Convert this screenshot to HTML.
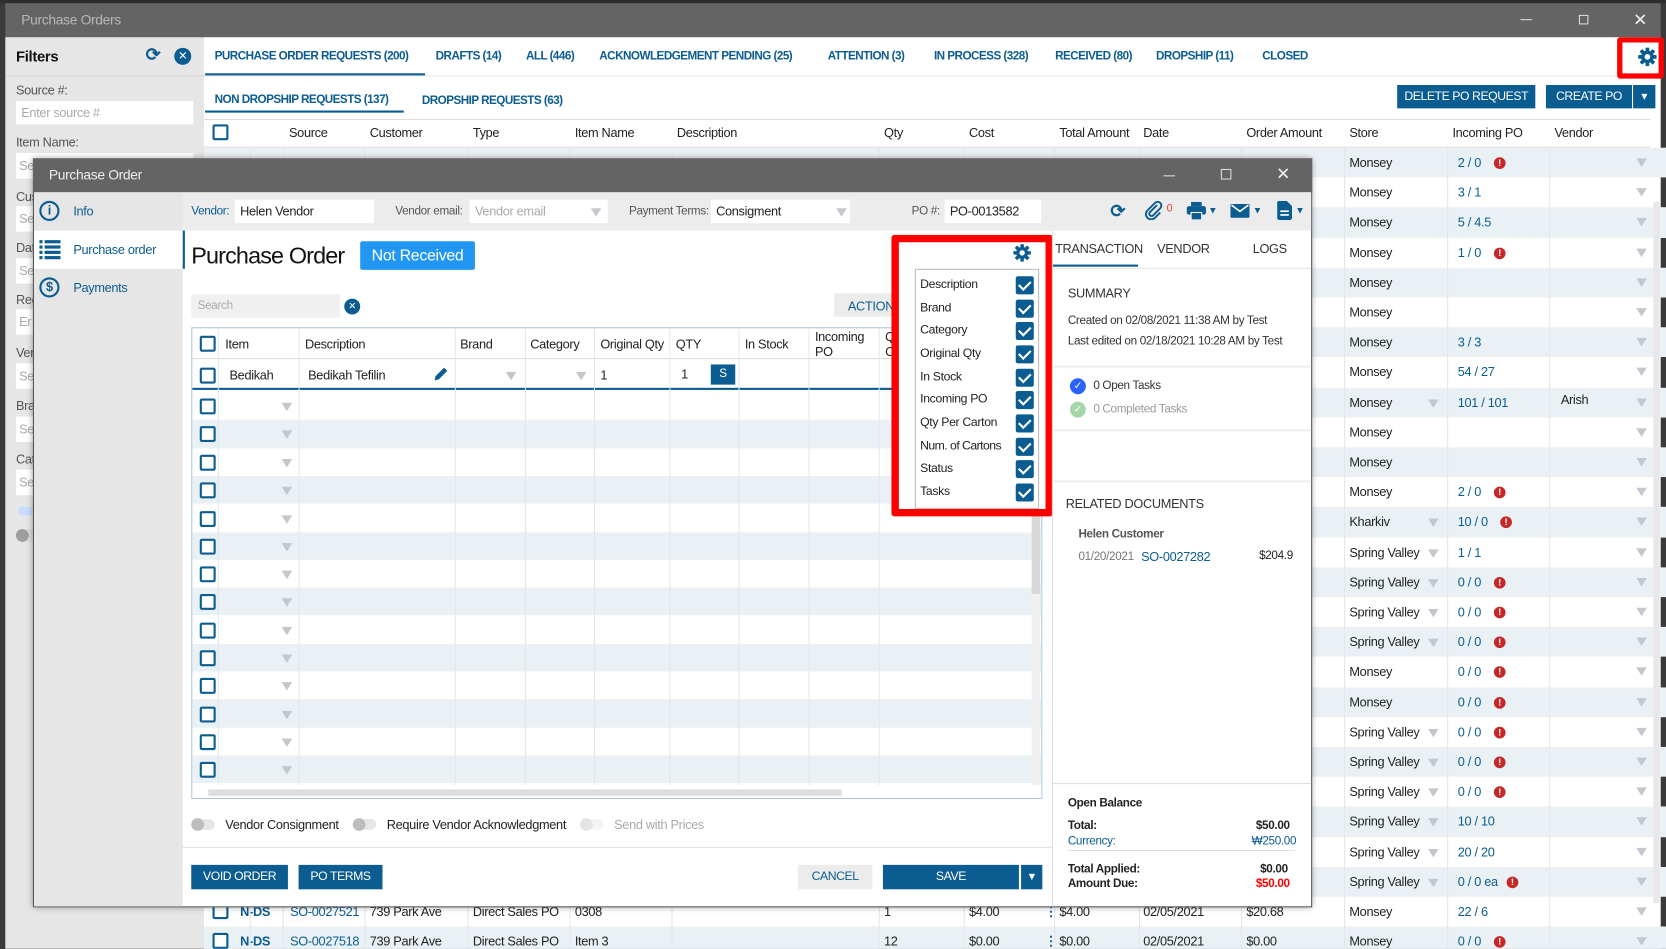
<!DOCTYPE html>
<html><head><meta charset="utf-8"><style>
*{box-sizing:border-box;margin:0;padding:0}
html,body{width:1666px;height:949px;overflow:hidden;background:#3a3a3a}
body{font-family:"Liberation Sans",sans-serif;font-size:12px;color:#222;letter-spacing:-0.3px}
#w{position:absolute;left:0;top:0;width:1568px;height:893px;transform:scale(1.0625);transform-origin:0 0;overflow:hidden;background:#3a3a3a}
.a{position:absolute;white-space:nowrap}
.b{color:#0b5c91}
.tab{position:absolute;top:47px;font-weight:bold;font-size:11px;color:#0b5c91;letter-spacing:-0.5px}
.cb{position:absolute;width:15px;height:15px;border:2px solid #0b5c91;border-radius:2px;background:#fff}
.tri{position:absolute;width:0;height:0;border-left:5px solid transparent;border-right:5px solid transparent;border-top:8px solid #c4c8cc}
.al{position:absolute;width:11px;height:11px;border-radius:50%;background:#c62828;color:#fff;font-size:9px;font-weight:bold;text-align:center;line-height:11px;letter-spacing:0}
.r{position:absolute;left:0;width:1553px;height:28.2px;line-height:28px}
.r.s{background:#eaf1f5}
.r .st{position:absolute;left:1078px}
.r .ip{position:absolute;left:1180px;color:#0b5c91}
.r .al{top:9px;left:1214px}
.r .vd{top:10px;left:1348px}
.r .sd{top:11px;left:1152px}
.vl{position:absolute;top:0;width:1px;height:100%;background:#e3e7ea}
.btn{position:absolute;background:#0b5c91;color:#fff;text-align:center;font-size:11.5px;line-height:22px;height:22px;letter-spacing:-0.4px}
.lbl{position:absolute;color:#555}
.inp{position:absolute;background:#fff;height:22px;line-height:22px;padding-left:5px}
.mr{position:absolute;left:0;width:801px;height:26.3px}
.mr.s{background:#eaf1f5}
.pi{position:absolute;left:4px;font-size:11.5px}
.pc{position:absolute;left:94px;width:17px;height:17px;background:#0b5c91;border-radius:2px}
.pc:after{content:"";position:absolute;left:5px;top:2px;width:5px;height:9px;border:solid #fff;border-width:0 2px 2px 0;transform:rotate(45deg)}
.tog{position:absolute;width:22px;height:10px;border-radius:5px;background:#e6e6e6}
.tog:before{content:"";position:absolute;left:0;top:-1px;width:12px;height:12px;border-radius:50%;background:#bdbdbd}
</style></head><body><div id="w">
<svg width="0" height="0" style="position:absolute"><defs><g id="gear"><g fill="#0b5c91"><circle cx="12" cy="12" r="7.5"/><rect x="9.8" y="1" width="4.4" height="22" rx="1"/><rect x="9.8" y="1" width="4.4" height="22" rx="1" transform="rotate(45 12 12)"/><rect x="9.8" y="1" width="4.4" height="22" rx="1" transform="rotate(90 12 12)"/><rect x="9.8" y="1" width="4.4" height="22" rx="1" transform="rotate(135 12 12)"/></g><circle cx="12" cy="12" r="3.4" fill="#fff"/></g></defs></svg>

<!-- title bar -->
<div class="a" style="left:0;top:0;width:1568px;height:3px;background:#2d2d2d"></div>
<div class="a" style="left:5px;top:3px;width:1558px;height:32px;background:#646464"></div>
<div class="a" style="left:20px;top:11px;color:#b8b8b8;font-size:13px">Purchase Orders</div>
<div class="a" style="left:1431px;top:18px;width:11px;height:1px;background:#ddd"></div>
<div class="a" style="left:1486px;top:14px;width:9px;height:9px;border:1px solid #ddd"></div>
<div class="a" style="left:1537px;top:9px;color:#eee;font-size:16px">✕</div>

<!-- filters -->
<div class="a" style="left:5px;top:35px;width:187px;height:858px;background:#e6e6e6"></div>
<div class="a" style="left:15px;top:45px;font-size:14px;font-weight:bold;color:#111">Filters</div>
<div class="a b" style="left:137px;top:42px;font-size:17px;font-weight:bold">⟳</div>
<div class="a" style="left:164px;top:45px;width:16px;height:16px;border-radius:50%;background:#0b5c91;color:#fff;font-size:11px;text-align:center;line-height:16px">✕</div>
<div class="a" style="left:5px;top:71px;width:187px;height:1px;background:#d6d6d6"></div>
<div class="a" style="left:15px;top:78px;color:#555">Source #:</div>
<div class="a" style="left:15px;top:95px;width:167px;height:22px;background:#fff;color:#aaa;padding:4px 5px">Enter source #</div>
<div class="a" style="left:15px;top:127px;color:#555">Item Name:</div>
<div class="a" style="left:15px;top:144px;width:167px;height:24px;background:#fff;color:#aaa;padding:5px 3px">Se</div>
<div class="a" style="left:15px;top:178px;color:#555">Cus</div>
<div class="a" style="left:15px;top:194px;width:167px;height:24px;background:#fff;color:#aaa;padding:5px 3px">Se</div>
<div class="a" style="left:15px;top:226px;color:#555">Dat</div>
<div class="a" style="left:15px;top:243px;width:167px;height:24px;background:#fff;color:#aaa;padding:5px 3px">Se</div>
<div class="a" style="left:15px;top:275px;color:#555">Rec</div>
<div class="a" style="left:15px;top:291px;width:167px;height:24px;background:#fff;color:#aaa;padding:5px 3px">Er</div>
<div class="a" style="left:15px;top:325px;color:#555">Ver</div>
<div class="a" style="left:15px;top:342px;width:167px;height:24px;background:#fff;color:#aaa;padding:5px 3px">Se</div>
<div class="a" style="left:15px;top:375px;color:#555">Bra</div>
<div class="a" style="left:15px;top:392px;width:167px;height:24px;background:#fff;color:#aaa;padding:5px 3px">Se</div>
<div class="a" style="left:15px;top:425px;color:#555">Cat</div>
<div class="a" style="left:15px;top:442px;width:167px;height:24px;background:#fff;color:#aaa;padding:5px 3px">Se</div>
<div class="a" style="left:17px;top:477px;width:20px;height:8px;border-radius:4px;background:#c8dcff"></div>
<div class="a" style="left:15px;top:498px;width:20px;height:12px;border-radius:6px;background:#ddd"></div>
<div class="a" style="left:15px;top:498px;width:12px;height:12px;border-radius:6px;background:#9e9e9e"></div>

<!-- main -->
<div class="a" style="left:192px;top:35px;width:1371px;height:858px;background:#fff"></div>
<div class="tab" style="left:202px">PURCHASE ORDER REQUESTS (200)</div>
<div class="tab" style="left:410px">DRAFTS (14)</div>
<div class="tab" style="left:495px">ALL (446)</div>
<div class="tab" style="left:564px">ACKNOWLEDGEMENT PENDING (25)</div>
<div class="tab" style="left:779px">ATTENTION (3)</div>
<div class="tab" style="left:879px">IN PROCESS (328)</div>
<div class="tab" style="left:993px">RECEIVED (80)</div>
<div class="tab" style="left:1088px">DROPSHIP (11)</div>
<div class="tab" style="left:1188px">CLOSED</div>
<div class="a" style="left:193px;top:69px;width:207px;height:2px;background:#0b5c91"></div>
<div class="a" style="left:192px;top:71px;width:1371px;height:1px;background:#e4e4e4"></div>
<div class="a" style="left:1522px;top:35px;width:44px;height:39px;border:5px solid #f00;border-radius:3px;background:#fff"></div>
<svg class="a" style="left:1541px;top:44px" width="19" height="19" viewBox="0 0 24 24"><use href="#gear"/></svg>
<div class="tab" style="left:202px;top:88px">NON DROPSHIP REQUESTS (137)</div>
<div class="tab" style="left:397px;top:89px">DROPSHIP REQUESTS (63)</div>
<div class="a" style="left:193px;top:104px;width:187px;height:2px;background:#0b5c91"></div>
<div class="btn" style="left:1315px;top:80px;width:130px">DELETE PO REQUEST</div>
<div class="btn" style="left:1455px;top:80px;width:81px">CREATE PO</div>
<div class="btn" style="left:1537px;top:80px;width:21px">▾</div>

<!-- main grid header -->
<div class="a" style="left:192px;top:112px;width:1361px;height:27px;border-top:1px solid #ddd;border-bottom:1px solid #ddd;background:#fff"></div>
<div class="cb" style="left:200px;top:117px"></div>
<div class="a" style="left:272px;top:118px">Source</div>
<div class="a" style="left:348px;top:118px">Customer</div>
<div class="a" style="left:445px;top:118px">Type</div>
<div class="a" style="left:541px;top:118px">Item Name</div>
<div class="a" style="left:637px;top:118px">Description</div>
<div class="a" style="left:832px;top:118px">Qty</div>
<div class="a" style="left:912px;top:118px">Cost</div>
<div class="a" style="left:997px;top:118px">Total Amount</div>
<div class="a" style="left:1076px;top:118px">Date</div>
<div class="a" style="left:1173px;top:118px">Order Amount</div>
<div class="a" style="left:1270px;top:118px">Store</div>
<div class="a" style="left:1367px;top:118px">Incoming PO</div>
<div class="a" style="left:1463px;top:118px">Vendor</div>

<div class="a" style="left:192px;top:139px;width:1361px;height:754px">
<div class="r s" style="top:0"><span class="st">Monsey</span><span class="ip">2 / 0</span><span class="al">!</span><i class="tri vd"></i></div>
<div class="r" style="top:28.2px"><span class="st">Monsey</span><span class="ip">3 / 1</span><i class="tri vd"></i></div>
<div class="r s" style="top:56.4px"><span class="st">Monsey</span><span class="ip">5 / 4.5</span><i class="tri vd"></i></div>
<div class="r" style="top:84.6px"><span class="st">Monsey</span><span class="ip">1 / 0</span><span class="al">!</span><i class="tri vd"></i></div>
<div class="r s" style="top:112.8px"><span class="st">Monsey</span><i class="tri vd"></i></div>
<div class="r" style="top:141px"><span class="st">Monsey</span><i class="tri vd"></i></div>
<div class="r s" style="top:169.2px"><span class="st">Monsey</span><span class="ip">3 / 3</span><i class="tri vd"></i></div>
<div class="r" style="top:197.4px"><span class="st">Monsey</span><span class="ip">54 / 27</span><i class="tri vd"></i></div>
<div class="r s" style="top:225.6px"><span class="st">Monsey</span><i class="tri sd"></i><span class="ip">101 / 101</span><span class="a" style="left:1277px;top:-3px">Arish</span><i class="tri vd"></i></div>
<div class="r" style="top:253.8px"><span class="st">Monsey</span><i class="tri vd"></i></div>
<div class="r s" style="top:282px"><span class="st">Monsey</span><i class="tri vd"></i></div>
<div class="r" style="top:310.2px"><span class="st">Monsey</span><span class="ip">2 / 0</span><span class="al">!</span><i class="tri vd"></i></div>
<div class="r s" style="top:338.4px"><span class="st">Kharkiv</span><i class="tri sd"></i><span class="ip">10 / 0</span><span class="al" style="left:1220px">!</span><i class="tri vd"></i></div>
<div class="r" style="top:366.6px"><span class="st">Spring Valley</span><i class="tri sd"></i><span class="ip">1 / 1</span><i class="tri vd"></i></div>
<div class="r s" style="top:394.8px"><span class="st">Spring Valley</span><i class="tri sd"></i><span class="ip">0 / 0</span><span class="al">!</span><i class="tri vd"></i></div>
<div class="r" style="top:423px"><span class="st">Spring Valley</span><i class="tri sd"></i><span class="ip">0 / 0</span><span class="al">!</span><i class="tri vd"></i></div>
<div class="r s" style="top:451.2px"><span class="st">Spring Valley</span><i class="tri sd"></i><span class="ip">0 / 0</span><span class="al">!</span><i class="tri vd"></i></div>
<div class="r" style="top:479.4px"><span class="st">Monsey</span><span class="ip">0 / 0</span><span class="al">!</span><i class="tri vd"></i></div>
<div class="r s" style="top:507.6px"><span class="st">Monsey</span><span class="ip">0 / 0</span><span class="al">!</span><i class="tri vd"></i></div>
<div class="r" style="top:535.8px"><span class="st">Spring Valley</span><i class="tri sd"></i><span class="ip">0 / 0</span><span class="al">!</span><i class="tri vd"></i></div>
<div class="r s" style="top:564px"><span class="st">Spring Valley</span><i class="tri sd"></i><span class="ip">0 / 0</span><span class="al">!</span><i class="tri vd"></i></div>
<div class="r" style="top:592.2px"><span class="st">Spring Valley</span><i class="tri sd"></i><span class="ip">0 / 0</span><span class="al">!</span><i class="tri vd"></i></div>
<div class="r s" style="top:620.4px"><span class="st">Spring Valley</span><i class="tri sd"></i><span class="ip">10 / 10</span><i class="tri vd"></i></div>
<div class="r" style="top:648.6px"><span class="st">Spring Valley</span><i class="tri sd"></i><span class="ip">20 / 20</span><i class="tri vd"></i></div>
<div class="r s" style="top:676.8px"><span class="st">Spring Valley</span><i class="tri sd"></i><span class="ip">0 / 0 ea</span><span class="al" style="left:1226px">!</span><i class="tri vd"></i></div>
<div class="r" style="top:705px"><i class="cb" style="left:8px;top:6px"></i><b class="a b" style="left:34px">N-DS</b><span class="a b" style="left:81px">SO-0027521</span><span class="a" style="left:156px">739 Park Ave</span><span class="a" style="left:253px">Direct Sales PO</span><span class="a" style="left:349px">0308</span><span class="a" style="left:640px">1</span><span class="a" style="left:720px">$4.00</span><span class="a b" style="left:791px;font-weight:bold">⋮</span><span class="a" style="left:805px">$4.00</span><span class="a" style="left:884px">02/05/2021</span><span class="a" style="left:981px">$20.68</span><span class="st">Monsey</span><span class="ip">22 / 6</span><i class="tri vd"></i></div>
<div class="r s" style="top:733.2px"><i class="cb" style="left:8px;top:6px"></i><b class="a b" style="left:34px">N-DS</b><span class="a b" style="left:81px">SO-0027518</span><span class="a" style="left:156px">739 Park Ave</span><span class="a" style="left:253px">Direct Sales PO</span><span class="a" style="left:349px">Item 3</span><span class="a" style="left:640px">12</span><span class="a" style="left:720px">$0.00</span><span class="a b" style="left:791px;font-weight:bold">⋮</span><span class="a" style="left:805px">$0.00</span><span class="a" style="left:884px">02/05/2021</span><span class="a" style="left:981px">$0.00</span><span class="st">Monsey</span><span class="ip">0 / 0</span><span class="al">!</span><i class="tri vd"></i></div>
<i class="vl" style="left:43px"></i><i class="vl" style="left:74px"></i><i class="vl" style="left:151px"></i><i class="vl" style="left:248px"></i><i class="vl" style="left:344px"></i><i class="vl" style="left:440px"></i><i class="vl" style="left:635px"></i><i class="vl" style="left:715px"></i><i class="vl" style="left:800px"></i><i class="vl" style="left:880px"></i><i class="vl" style="left:976px"></i><i class="vl" style="left:1073px"></i><i class="vl" style="left:1170px"></i><i class="vl" style="left:1266px"></i>
</div>
<div class="a" style="left:1556px;top:190px;width:6px;height:660px;background:#e8e8e8"></div>

<!-- MODAL -->
<div class="a" style="left:31px;top:149px;width:1204px;height:705px;background:#fff;border:1px solid #555;box-shadow:0 0 6px rgba(0,0,0,.4)"></div>
<div class="a" style="left:31px;top:149px;width:1204px;height:32px;background:#646464"></div>
<div class="a" style="left:46px;top:157px;color:#eee;font-size:13px">Purchase Order</div>
<div class="a" style="left:1095px;top:165px;width:11px;height:1px;background:#ddd"></div>
<div class="a" style="left:1149px;top:159px;width:10px;height:10px;border:1px solid #ddd"></div>
<div class="a" style="left:1201px;top:154px;color:#eee;font-size:16px">✕</div>

<div class="a" style="left:32px;top:181px;width:140px;height:672px;background:#e6e6e6"></div>
<div class="a" style="left:32px;top:217px;width:140px;height:36px;background:#fff"></div>
<div class="a" style="left:37px;top:189px;width:19px;height:19px;border:2px solid #0b5c91;border-radius:50%;color:#0b5c91;font-weight:bold;text-align:center;line-height:15px;font-size:12px">i</div>
<div class="a b" style="left:69px;top:192px">Info</div>
<svg class="a" style="left:37px;top:225px" width="20" height="20" viewBox="0 0 20 20" fill="#0b5c91"><rect x="0" y="1" width="3" height="3"/><rect x="5" y="1" width="15" height="3"/><rect x="0" y="6" width="3" height="3"/><rect x="5" y="6" width="15" height="3"/><rect x="0" y="11" width="3" height="3"/><rect x="5" y="11" width="15" height="3"/><rect x="0" y="16" width="3" height="3"/><rect x="5" y="16" width="15" height="3"/></svg>
<div class="a b" style="left:69px;top:228px">Purchase order</div>
<div class="a" style="left:37px;top:261px;width:19px;height:19px;border:2px solid #0b5c91;border-radius:50%;color:#0b5c91;font-weight:bold;text-align:center;line-height:15px;font-size:12px">$</div>
<div class="a b" style="left:69px;top:264px">Payments</div>

<div class="a" style="left:172px;top:181px;width:1062px;height:36px;background:#ececec"></div>
<div class="a" style="left:172px;top:217px;width:2px;height:36px;background:#0b5c91"></div>
<div class="a b" style="left:180px;top:193px;font-size:11px">Vendor:</div>
<div class="inp" style="left:221px;top:188px;width:131px">Helen Vendor</div>
<div class="lbl" style="left:372px;top:193px;font-size:11px">Vendor email:</div>
<div class="inp" style="left:442px;top:188px;width:130px;color:#aaa">Vendor email</div><i class="tri" style="left:556px;top:196px"></i>
<div class="lbl" style="left:592px;top:193px;font-size:11px">Payment Terms:</div>
<div class="inp" style="left:669px;top:188px;width:131px">Consigment</div><i class="tri" style="left:787px;top:196px"></i>
<div class="lbl" style="left:858px;top:193px;font-size:11px">PO #:</div>
<div class="inp" style="left:889px;top:188px;width:91px">PO-0013582</div>
<div class="a b" style="left:1045px;top:189px;font-size:17px;font-weight:bold">⟳</div>
<svg class="a" style="left:1077px;top:189px" width="18" height="18" viewBox="0 0 18 18"><path d="M12 4 L5 11 a2.2 2.2 0 0 0 3 3 L15 7 a3.5 3.5 0 0 0 -5 -5 L3 9 a4.8 4.8 0 0 0 7 7 L15 11" fill="none" stroke="#0b5c91" stroke-width="1.8"/></svg><div class="a" style="left:1098px;top:191px;color:#e53935;font-size:10px">0</div>
<svg class="a" style="left:1116px;top:190px" width="20" height="17" viewBox="0 0 20 17" fill="#0b5c91"><rect x="5" y="0" width="10" height="4"/><rect x="1" y="4" width="18" height="8" rx="2"/><rect x="5" y="10" width="10" height="7" fill="#0b5c91" stroke="#fff" stroke-width="1"/></svg><div class="a b" style="left:1137px;top:193px;font-size:9px">▼</div>
<svg class="a" style="left:1158px;top:192px" width="18" height="13" viewBox="0 0 18 13"><rect width="18" height="13" rx="1" fill="#0b5c91"/><path d="M1 1 L9 7 L17 1" fill="none" stroke="#fff" stroke-width="1.5"/></svg><div class="a b" style="left:1179px;top:193px;font-size:9px">▼</div>
<svg class="a" style="left:1202px;top:189px" width="14" height="18" viewBox="0 0 14 18"><path d="M0 2 a2 2 0 0 1 2 -2 H9 L14 5 V16 a2 2 0 0 1 -2 2 H2 a2 2 0 0 1 -2 -2Z" fill="#0b5c91"/><rect x="3" y="9" width="8" height="1.6" fill="#fff"/><rect x="3" y="12.5" width="8" height="1.6" fill="#fff"/></svg><div class="a b" style="left:1219px;top:193px;font-size:9px">▼</div>

<div class="a" style="left:180px;top:228px;font-size:22px;color:#111;letter-spacing:-0.8px">Purchase Order</div>
<div class="a" style="left:339px;top:227px;width:108px;height:27px;background:#2196f3;border-radius:2px;color:#fff;font-size:15px;text-align:center;line-height:27px">Not Received</div>
<div class="a" style="left:180px;top:277px;width:140px;height:22px;background:#f0f0f0;color:#aaa;padding:5px 6px;font-size:11px">Search</div>
<div class="a" style="left:324px;top:281px;width:15px;height:15px;border-radius:50%;background:#0b5c91;color:#fff;font-size:9px;text-align:center;line-height:15px">✕</div>
<div class="a" style="left:785px;top:276px;width:60px;height:22px;background:#ececec;color:#0b5c91;padding:5px 13px">ACTION</div>

<!-- modal grid -->
<div class="a" style="left:180px;top:308px;width:801px;height:444px;border:1px solid #aac8dc;overflow:hidden;background:#fff">
 <div class="a" style="left:0;top:0;width:801px;height:29px;border-bottom:1px solid #ddd"></div>
 <i class="cb" style="left:7px;top:7px"></i>
 <span class="a" style="left:31px;top:8px">Item</span><span class="a" style="left:106px;top:8px">Description</span><span class="a" style="left:252px;top:8px">Brand</span><span class="a" style="left:318px;top:8px">Category</span><span class="a" style="left:384px;top:8px">Original Qty</span><span class="a" style="left:455px;top:8px">QTY</span><span class="a" style="left:520px;top:8px">In Stock</span><span class="a" style="left:586px;top:1px;line-height:14px">Incoming<br>PO</span><span class="a" style="left:652px;top:1px;line-height:14px">Qty P<br>Carto</span>
 <div class="a" style="left:0;top:29px;width:801px;height:29px;border-bottom:2px solid #0b5c91"></div>
 <i class="cb" style="left:7px;top:37px"></i>
 <span class="a" style="left:35px;top:37px">Bedikah</span><span class="a" style="left:109px;top:37px">Bedikah Tefilin</span>
 <svg class="a" style="left:227px;top:35px" width="15" height="15" viewBox="0 0 15 15"><path d="M1 14 L2 10 L10 2 L13 5 L5 13 Z" fill="#0b5c91"/></svg>
 <i class="tri" style="left:295px;top:41px"></i><i class="tri" style="left:361px;top:41px"></i>
 <span class="a" style="left:384px;top:37px">1</span><span class="a" style="left:460px;top:36px">1</span>
 <div class="a" style="left:488px;top:34px;width:23px;height:19px;background:#0b5c91;color:#fff;text-align:center;line-height:19px;font-size:11px">S</div>
 <div class="a" style="left:0;top:60px;width:801px;height:384px">
  <div class="mr" style="top:0"></div><div class="mr s" style="top:26.3px"></div><div class="mr" style="top:52.6px"></div><div class="mr s" style="top:78.9px"></div><div class="mr" style="top:105.2px"></div><div class="mr s" style="top:131.5px"></div><div class="mr" style="top:157.8px"></div><div class="mr s" style="top:184.1px"></div><div class="mr" style="top:210.4px"></div><div class="mr s" style="top:236.7px"></div><div class="mr" style="top:263px"></div><div class="mr s" style="top:289.3px"></div><div class="mr" style="top:315.6px"></div><div class="mr s" style="top:341.9px"></div>
  <i class="cb" style="left:7px;top:6px"></i><i class="cb" style="left:7px;top:32px"></i><i class="cb" style="left:7px;top:59px"></i><i class="cb" style="left:7px;top:85px"></i><i class="cb" style="left:7px;top:112px"></i><i class="cb" style="left:7px;top:138px"></i><i class="cb" style="left:7px;top:164px"></i><i class="cb" style="left:7px;top:190px"></i><i class="cb" style="left:7px;top:217px"></i><i class="cb" style="left:7px;top:243px"></i><i class="cb" style="left:7px;top:269px"></i><i class="cb" style="left:7px;top:296px"></i><i class="cb" style="left:7px;top:322px"></i><i class="cb" style="left:7px;top:348px"></i>
  <i class="tri" style="left:84px;top:10px"></i><i class="tri" style="left:84px;top:36px"></i><i class="tri" style="left:84px;top:63px"></i><i class="tri" style="left:84px;top:89px"></i><i class="tri" style="left:84px;top:116px"></i><i class="tri" style="left:84px;top:142px"></i><i class="tri" style="left:84px;top:168px"></i><i class="tri" style="left:84px;top:194px"></i><i class="tri" style="left:84px;top:221px"></i><i class="tri" style="left:84px;top:247px"></i><i class="tri" style="left:84px;top:273px"></i><i class="tri" style="left:84px;top:300px"></i><i class="tri" style="left:84px;top:326px"></i><i class="tri" style="left:84px;top:352px"></i>
 </div>
 <i class="vl" style="left:24px"></i><i class="vl" style="left:100px"></i><i class="vl" style="left:247px"></i><i class="vl" style="left:313px"></i><i class="vl" style="left:378px"></i><i class="vl" style="left:449px"></i><i class="vl" style="left:514px"></i><i class="vl" style="left:580px"></i><i class="vl" style="left:646px"></i>
 <div class="a" style="left:790px;top:60px;width:8px;height:370px;background:#f0f0f0"></div>
 <div class="a" style="left:790px;top:90px;width:8px;height:160px;background:#d8d8d8"></div>
 <div class="a" style="left:0;top:430px;width:801px;height:14px;background:#fff"></div>
 <div class="a" style="left:15px;top:434px;width:596px;height:6px;background:#ddd"></div>
</div>

<div class="tog" style="left:180px;top:771px"></div><div class="a" style="left:212px;top:769px">Vendor Consignment</div>
<div class="tog" style="left:332px;top:771px"></div><div class="a" style="left:364px;top:769px">Require Vendor Acknowledgment</div>
<div class="tog" style="left:546px;top:771px;opacity:.4"></div><div class="a" style="left:578px;top:769px;color:#aaa">Send with Prices</div>
<div class="a" style="left:172px;top:797px;width:818px;height:1px;background:#e0e0e0"></div>
<div class="btn" style="left:180px;top:814px;width:91px;height:23px;line-height:23px">VOID ORDER</div>
<div class="btn" style="left:281px;top:814px;width:79px;height:23px;line-height:23px">PO TERMS</div>
<div class="btn" style="left:751px;top:814px;width:70px;height:23px;line-height:23px;background:#ececec;color:#0b5c91">CANCEL</div>
<div class="btn" style="left:831px;top:814px;width:128px;height:23px;line-height:23px">SAVE</div>
<div class="btn" style="left:961px;top:814px;width:20px;height:23px;line-height:23px;font-size:10px">▼</div>

<!-- column chooser -->
<div class="a" style="left:839px;top:221px;width:152px;height:265px;border:7px solid #f00;border-radius:3px;background:#fff"></div>
<svg class="a" style="left:953px;top:229px" width="18" height="18" viewBox="0 0 24 24"><use href="#gear"/></svg>
<div class="a" style="left:861px;top:253px;width:117px;height:226px;border:1px solid #bbb;background:#fff">
 <span class="pi" style="top:8px">Description</span><i class="pc" style="top:6px"></i>
 <span class="pi" style="top:30px">Brand</span><i class="pc" style="top:28px"></i>
 <span class="pi" style="top:51px">Category</span><i class="pc" style="top:49px"></i>
 <span class="pi" style="top:73px">Original Qty</span><i class="pc" style="top:71px"></i>
 <span class="pi" style="top:95px">In Stock</span><i class="pc" style="top:93px"></i>
 <span class="pi" style="top:116px">Incoming PO</span><i class="pc" style="top:114px"></i>
 <span class="pi" style="top:138px">Qty Per Carton</span><i class="pc" style="top:136px"></i>
 <span class="pi" style="top:160px;letter-spacing:-0.5px">Num. of Cartons</span><i class="pc" style="top:158px"></i>
 <span class="pi" style="top:181px">Status</span><i class="pc" style="top:179px"></i>
 <span class="pi" style="top:203px">Tasks</span><i class="pc" style="top:201px"></i>
</div>

<!-- right panel -->
<div class="a" style="left:990px;top:217px;width:1px;height:636px;background:#ddd"></div>
<div class="a" style="left:993px;top:227px;color:#333">TRANSACTION</div>
<div class="a" style="left:1089px;top:227px;color:#333">VENDOR</div>
<div class="a" style="left:1179px;top:227px;color:#333">LOGS</div>
<div class="a" style="left:991px;top:249px;width:80px;height:2px;background:#0b5c91"></div>
<div class="a" style="left:991px;top:252px;width:243px;height:1px;background:#e4e4e4"></div>
<div class="a" style="left:1005px;top:269px;color:#333">SUMMARY</div>
<div class="a" style="left:1005px;top:296px;font-size:11px;color:#333">Created on 02/08/2021 11:38 AM by Test</div>
<div class="a" style="left:1005px;top:315px;font-size:11px;color:#333">Last edited on 02/18/2021 10:28 AM by Test</div>
<div class="a" style="left:991px;top:344px;width:243px;height:2px;background:#eee"></div>
<div class="a" style="left:1007px;top:356px;width:15px;height:15px;border-radius:50%;background:#2962ff;color:#fff;font-size:10px;text-align:center;line-height:15px">✓</div>
<div class="a" style="left:1029px;top:357px;font-size:11px;color:#333">0 Open Tasks</div>
<div class="a" style="left:1007px;top:378px;width:15px;height:15px;border-radius:50%;background:#a5d6a7;color:#fff;font-size:10px;text-align:center;line-height:15px">✓</div>
<div class="a" style="left:1029px;top:379px;font-size:11px;color:#999">0 Completed Tasks</div>
<div class="a" style="left:991px;top:404px;width:243px;height:2px;background:#eee"></div>
<div class="a" style="left:991px;top:452px;width:243px;height:2px;background:#eee"></div>
<div class="a" style="left:1003px;top:467px;color:#333">RELATED DOCUMENTS</div>
<div class="a" style="left:1015px;top:497px;color:#555;font-weight:bold;font-size:11px">Helen Customer</div>
<div class="a" style="left:1015px;top:518px;color:#777;font-size:11px">01/20/2021</div>
<div class="a b" style="left:1074px;top:517px">SO-0027282</div>
<div class="a" style="left:1185px;top:517px;font-size:11px">$204.9</div>
<div class="a" style="left:991px;top:737px;width:243px;height:1px;background:#ddd"></div>
<div class="a" style="left:1005px;top:750px;font-weight:bold;font-size:11px">Open Balance</div>
<div class="a" style="left:1005px;top:771px;font-weight:bold;font-size:11px">Total:</div><div class="a" style="left:1182px;top:771px;font-weight:bold;font-size:11px">$50.00</div>
<div class="a b" style="left:1005px;top:786px;font-size:11px">Currency:</div><div class="a b" style="left:1178px;top:786px;font-size:11px">₩250.00</div>
<div class="a" style="left:1005px;top:800px;width:214px;height:1px;background:#e0e0e0"></div>
<div class="a" style="left:1005px;top:812px;font-weight:bold;font-size:11px">Total Applied:</div><div class="a" style="left:1186px;top:812px;font-weight:bold;font-size:11px">$0.00</div>
<div class="a" style="left:1005px;top:826px;font-weight:bold;font-size:11px">Amount Due:</div><div class="a" style="left:1182px;top:826px;font-weight:bold;font-size:11px;color:#f00">$50.00</div>

</div></body></html>
